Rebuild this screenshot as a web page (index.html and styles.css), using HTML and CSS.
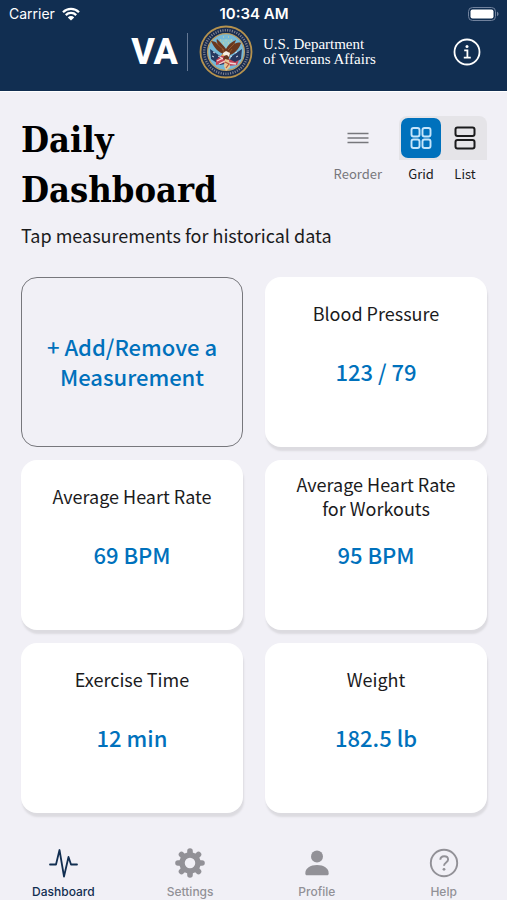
FILE: index.html
```html
<!DOCTYPE html>
<html lang="en">
<head>
<meta charset="utf-8">
<meta name="viewport" content="width=device-width, initial-scale=1">
<title>Daily Dashboard</title>
<link rel="stylesheet" href="styles.css">
</head>
<body>
<div class="app">
  <header class="header">
    <div class="status">
      <div class="carrier">
        <span>Carrier</span>
        <svg class="wifi" viewBox="0 0 18 14" aria-hidden="true">
          <path d="M1 5.2a11.4 11.4 0 0 1 16 0M3.8 8.1a7.4 7.4 0 0 1 10.4 0" fill="none" stroke="currentColor" stroke-width="2.3"/>
          <path d="M9 13.6 5.8 10.4a4.5 4.5 0 0 1 6.4 0z" fill="currentColor"/>
        </svg>
      </div>
      <span class="clock">10:34 AM</span>
      <svg class="battery" viewBox="0 0 31 14" aria-hidden="true">
        <rect x="0.5" y="0.5" width="27" height="13" rx="4" fill="none" stroke="#71829d"/>
        <rect x="2.5" y="2.5" width="23" height="9" rx="2" fill="#fff"/>
        <path d="M29 4.8c2 .7 2 3.7 0 4.4z" fill="#71829d"/>
      </svg>
    </div>
    <div class="brand-bar">
      <div class="brand">
        <span class="brand-va">VA</span>
        <svg class="seal" viewBox="0 0 54 54" aria-hidden="true">
          <circle cx="27" cy="27" r="25.5" fill="#182c50" stroke="#b5924e" stroke-width="1.8"/>
          <circle cx="27" cy="27" r="21.8" fill="none" stroke="#7f8190" stroke-width="2.4" stroke-dasharray="1.1 1.3"/>
          <circle cx="27" cy="27" r="18.4" fill="#75b8d8" stroke="#b99c61" stroke-width="1.3"/>
          <path d="M21 14.5h12l3 6-9 9-9-9z" fill="#8fc8cf"/>
          <path d="M24 12h1M29 12h1M21 15h1M32 15h1M26.5 15h1M24 18h1M29 18h1" stroke="#ddd48d" stroke-width="1.2"/>
          <path d="m11 24 10 7 5 8-5 1-9-6zM43 24l-10 7-5 8 5 1 9-6z" fill="#27375f"/>
          <path d="m14 27 2 1m-3 3 2 1m4-1 2 1m17-5-2 1m3 3-2 1m-4-1-2 1" stroke="#d9dce5" stroke-width="1"/>
          <path d="m17 35 7-6 4 4 8 4 4-2-2 5-8 1-5-3-8 2z" fill="#c44559"/>
          <path d="m18 36 6-3m-4 6 6-3m4 2 7 1m-16-7 3 2" stroke="#f1d7d4" stroke-width="1.3"/>
          <path d="M26 29c-7-1-11-7-14-13 3 0 5 1 7 3-1-2-2-3-1-5 4 4 7 7 9 10 2-4 5-7 10-9-1 3-2 4-4 5 4-2 6-3 9-2-2 6-6 10-11 12l-2 6-5-2z" fill="#69371f"/>
          <path d="m17 18 8 7m11-7-7 7m-6-1 3 4m7-4-3 4" stroke="#96572b" stroke-width="1"/>
          <path d="m24 28 3-2 4 2-1 4-2-2-4 1z" fill="#f5eee2"/>
          <path d="m24 29-2 2 3 0z" fill="#e4b44b"/>
          <path d="m26 34 4 1 1 7-4 4-2-5z" fill="#e6c995"/>
          <path d="m26 37 4 2-3 4" fill="none" stroke="#b85539" stroke-width="1.2"/>
        </svg>
        <span class="brand-name">U.S. Department<br>of Veterans Affairs</span>
      </div>
      <button class="info" type="button" aria-label="Information">
        <svg viewBox="0 0 28 28" aria-hidden="true">
          <circle cx="14" cy="14" r="12.5" fill="none" stroke="currentColor" stroke-width="1.8"/>
          <circle cx="14" cy="8.4" r="1.5" fill="currentColor"/>
          <path d="M11.2 12.3h3.2v7.4m-3.6 0h7" fill="none" stroke="currentColor" stroke-width="1.8"/>
        </svg>
      </button>
    </div>
  </header>

  <main class="main">
    <div class="intro">
      <h1 class="title">Daily Dashboard</h1>
      <div class="tools">
        <button class="tool tool-reorder" type="button">
          <span class="tool-icon">
            <svg viewBox="0 0 22 14" aria-hidden="true"><path d="M0.5 2.5h21M0.5 7h21M0.5 11.5h21" stroke="currentColor" stroke-width="1.6"/></svg>
          </span>
          <span>Reorder</span>
        </button>
        <div class="views">
          <button class="tool tool-view tool-active" type="button" aria-pressed="true">
            <span class="tool-icon">
              <svg viewBox="0 0 24 24" aria-hidden="true"><g fill="none" stroke="currentColor" stroke-width="1.9"><rect x="2.5" y="2" width="8" height="8.5" rx="2"/><rect x="13.5" y="2" width="8" height="8.5" rx="2"/><rect x="2.5" y="13.5" width="8" height="8.5" rx="2"/><rect x="13.5" y="13.5" width="8" height="8.5" rx="2"/></g></svg>
            </span>
            <span>Grid</span>
          </button>
          <button class="tool tool-view" type="button" aria-pressed="false">
            <span class="tool-icon">
              <svg viewBox="0 0 24 24" aria-hidden="true"><g fill="none" stroke="currentColor" stroke-width="2"><rect x="2.5" y="1.5" width="19" height="8.5" rx="2"/><rect x="2.5" y="14" width="19" height="8.5" rx="2"/></g></svg>
            </span>
            <span>List</span>
          </button>
        </div>
      </div>
    </div>
    <p class="hint">Tap measurements for historical data</p>

    <div class="grid">
      <button class="card card-add" type="button">+ Add/Remove a Measurement</button>
      <button class="card" type="button"><span class="card-name">Blood Pressure</span><span class="card-value">123 / 79</span></button>
      <button class="card" type="button"><span class="card-name">Average Heart Rate</span><span class="card-value">69 BPM</span></button>
      <button class="card" type="button"><span class="card-name">Average Heart Rate for Workouts</span><span class="card-value">95 BPM</span></button>
      <button class="card" type="button"><span class="card-name">Exercise Time</span><span class="card-value">12 min</span></button>
      <button class="card" type="button"><span class="card-name">Weight</span><span class="card-value">182.5 lb</span></button>
    </div>
  </main>

  <nav class="tabs" aria-label="Main">
    <a class="tab tab-active" href="#dashboard" aria-current="page">
      <svg viewBox="0 0 32 32" aria-hidden="true"><path d="M3 17.500h6L12.500 3l4.500 26.500L21.500 10l2.500 7.500h6" fill="none" stroke="currentColor" stroke-width="1.8" stroke-linejoin="round" stroke-linecap="round"/></svg>
      <span>Dashboard</span>
    </a>
    <a class="tab" href="#settings">
      <svg viewBox="0 0 32 32" aria-hidden="true">
        <g stroke="currentColor" stroke-width="5.600" stroke-linecap="round"><path d="M16 4v3M16 25v3M4 16h3M25 16h3M7.500 7.500l2 2M22.500 22.500l2 2M7.500 24.500l2-2M22.500 9.500l2-2"/></g>
        <circle cx="16" cy="16" r="8" fill="none" stroke="currentColor" stroke-width="5.500"/>
      </svg>
      <span>Settings</span>
    </a>
    <a class="tab" href="#profile">
      <svg viewBox="0 0 32 32" aria-hidden="true"><circle cx="16" cy="9.500" r="6" fill="currentColor"/><path d="M4.300 26.500c0-5.500 5-8.500 11.700-8.500s11.700 3 11.700 8.500c0 1.200-.6 1.800-1.700 1.800H6c-1.100 0-1.700-.6-1.700-1.800z" fill="currentColor"/></svg>
      <span>Profile</span>
    </a>
    <a class="tab" href="#help">
      <svg viewBox="0 0 32 32" aria-hidden="true"><circle cx="16" cy="16" r="13.200" fill="none" stroke="currentColor" stroke-width="1.900"/><path d="M12.300 12.800c.1-2.300 1.600-3.600 3.900-3.600s3.900 1.300 3.900 3.300c0 3-4.100 2.900-4.100 6.300" fill="none" stroke="currentColor" stroke-width="1.900"/><circle cx="16" cy="22.300" r="1.400" fill="currentColor"/></svg>
      <span>Help</span>
    </a>
  </nav>
</div>
</body>
</html>
```
FILE: styles.css
```css
* {
  box-sizing: border-box;
}

body {
  margin: 0;
  background: #f1f0f6;
  color: #1b1b1d;
  font-family: "Noto Sans CJK SC", "Open Sans", sans-serif;
  font-kerning: normal;
}

button {
  border: 0;
  padding: 0;
  background: none;
  color: inherit;
  font: inherit;
  font-kerning: inherit;
}

.app {
  display: flex;
  flex-direction: column;
  min-height: 100vh;
}

.header {
  background: #112e51;
  border-bottom: 1px solid #fff;
  color: #fff;
}

.status {
  display: grid;
  grid-template-columns: 1fr auto 1fr;
  align-items: center;
  padding: 3px 8px 0 9px;
  font: 14px/21px Inter, sans-serif;
}

.carrier {
  display: flex;
  align-items: center;
  gap: 7px;
}

.wifi {
  width: 18px;
  height: 14px;
}

.clock {
  font-size: 15px;
  font-weight: 600;
}

.battery {
  justify-self: end;
  width: 31px;
  height: 14px;
}

.brand-bar {
  display: grid;
  grid-template-columns: 1fr auto 1fr;
  align-items: center;
  padding: 0 26px 11px;
}

.brand {
  grid-column: 2;
  display: flex;
  align-items: center;
}

.brand-va {
  padding-right: 9px;
  border-right: 1px solid #647894;
  font: 800 36px/38px Roboto, sans-serif;
}

.seal {
  width: 54px;
  height: 56px;
  margin: 0 10px 0 11px;
}

.brand-name {
  font: 15px/15px "Liberation Serif", serif;
}

.info {
  justify-self: end;
  width: 28px;
  height: 28px;
}

.info svg {
  display: block;
}

.main {
  flex: 1;
  padding: 22px 20px 0 21px;
}

.intro {
  display: flex;
  justify-content: space-between;
  align-items: flex-start;
}

.title {
  flex: 0 1 220px;
  margin: 0;
  color: #000;
  font-family: "DejaVu Serif Condensed", "DejaVu Serif", serif;
  font-size: 36px;
  font-weight: 700;
  line-height: 50px;
}

.tools {
  display: flex;
  gap: 17px;
  padding-top: 2px;
}

.tool {
  display: flex;
  flex-direction: column;
  align-items: center;
  gap: 4px;
  font-size: 13px;
  line-height: 20px;
}

.tool-icon {
  display: flex;
  align-items: center;
  justify-content: center;
  height: 44px;
}

.tool-reorder {
  color: #77777c;
}

.tool-reorder svg {
  width: 22px;
  height: 14px;
}

.views {
  display: flex;
  background: linear-gradient(#e5e4e8, #e5e4e8) top / 100% 44px no-repeat;
  border-radius: 8px;
}

.tool-view {
  width: 44px;
}

.tool-view svg {
  width: 24px;
  height: 24px;
}

.tool-active .tool-icon {
  width: 40px;
  height: 40px;
  margin: 2px 0;
  border-radius: 7px;
  background: #0071bc;
  color: #c5e5fb;
}

.hint {
  margin: 8px 0 0;
  font-size: 18px;
  line-height: 26px;
}

.grid {
  display: grid;
  grid-template-columns: 1fr 1fr;
  gap: 13px 22px;
  margin-top: 29px;
}

.card {
  display: flex;
  flex-direction: column;
  align-items: center;
  min-height: 170px;
  padding: 12px 24px 14px;
  border-radius: 16px;
  background: #fff;
  box-shadow: 1px 4px 2px #dcdbe0;
}

.card-name {
  display: flex;
  align-items: center;
  min-height: 48px;
  font-size: 18px;
  line-height: 24px;
}

.card-value {
  margin-top: 19px;
  color: #0071bc;
  font-size: 22px;
  font-weight: 500;
  line-height: 30px;
}

.card-add {
  justify-content: center;
  border: 1px solid #77777c;
  background: none;
  box-shadow: none;
  color: #0071bc;
  font-size: 22px;
  font-weight: 500;
  line-height: 30px;
}

.tabs {
  display: grid;
  grid-template-columns: repeat(4, 1fr);
  background: #f1f0f6;
}

.tab {
  display: flex;
  flex-direction: column;
  align-items: center;
  gap: 5px;
  color: #929197;
  font: 500 12px/16px Inter, sans-serif;
  text-decoration: none;
}

.tab svg {
  width: 32px;
  height: 32px;
}

.tab-active {
  color: #112e51;
}
```
